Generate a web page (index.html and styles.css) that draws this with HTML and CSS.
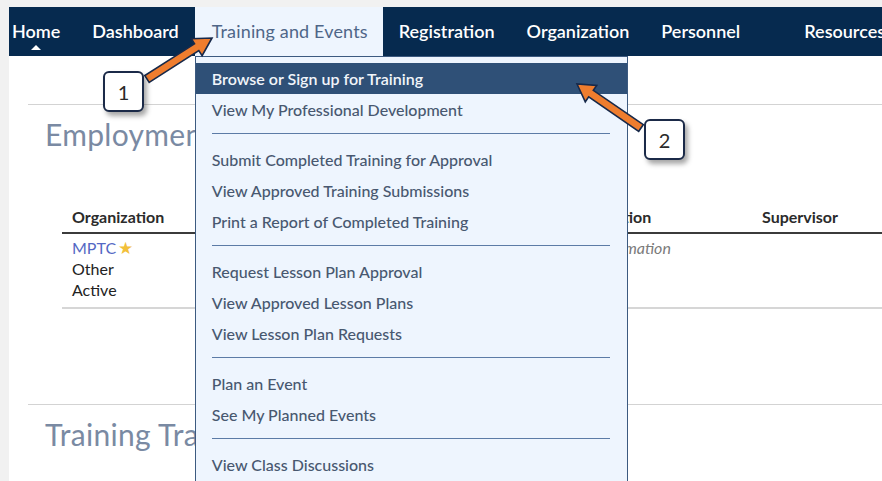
FILE: index.html
```html
<!DOCTYPE html>
<html lang="en">
<head>
<meta charset="utf-8">
<title>Training and Events</title>
<link rel="stylesheet" href="styles.css">
</head>
<body>
<div class="frame">
  <div class="app">
    <nav class="topnav">
      <a class="nav-item nav-home" href="#">Home</a>
      <a class="nav-item" href="#">Dashboard</a>
      <div class="nav-item is-open">
        <span class="tab-label">Training and Events</span>
        <div class="dropdown">
          <a class="menu-item is-active" href="#">Browse or Sign up for Training</a>
          <a class="menu-item" href="#">View My Professional Development</a>
          <div class="menu-sep"></div>
          <a class="menu-item" href="#">Submit Completed Training for Approval</a>
          <a class="menu-item" href="#">View Approved Training Submissions</a>
          <a class="menu-item" href="#">Print a Report of Completed Training</a>
          <div class="menu-sep"></div>
          <a class="menu-item" href="#">Request Lesson Plan Approval</a>
          <a class="menu-item" href="#">View Approved Lesson Plans</a>
          <a class="menu-item" href="#">View Lesson Plan Requests</a>
          <div class="menu-sep"></div>
          <a class="menu-item" href="#">Plan an Event</a>
          <a class="menu-item" href="#">See My Planned Events</a>
          <div class="menu-sep"></div>
          <a class="menu-item" href="#">View Class Discussions</a>
        </div>
      </div>
      <a class="nav-item" href="#">Registration</a>
      <a class="nav-item" href="#">Organization</a>
      <a class="nav-item nav-personnel" href="#">Personnel</a>
      <a class="nav-item" href="#">Resources</a>
    </nav>

    <main class="content">
      <section class="panel">
        <h2 class="panel-title">Employment History</h2>
        <div class="emp-table">
          <div class="emp-grid emp-head">
            <div class="cell">Organization</div>
            <div class="cell"></div>
            <div class="cell"></div>
            <div class="cell">Position</div>
            <div class="cell">Supervisor</div>
          </div>
          <div class="emp-grid emp-row">
            <div class="cell">
              <a class="org-link" href="#">MPTC</a><span class="star">&#9733;</span><br>
              Other<br>
              Active
            </div>
            <div class="cell"></div>
            <div class="cell"></div>
            <div class="cell muted">Information</div>
            <div class="cell"></div>
          </div>
        </div>
      </section>

      <section class="panel">
        <h2 class="panel-title">Training Transcript</h2>
      </section>
    </main>
  </div>

  <div class="annotations">
    <svg class="arrows" width="882" height="481" viewBox="0 0 882 481">
      <polygon class="arrow" points="149.2,82.4 198.8,50.6 202.1,55.6 212,38 191.3,38.8 194.5,43.8 144.8,75.6"/>
      <polygon class="arrow" points="643.3,124.7 593.3,90.3 596.7,85.4 577,84 585.3,101.8 588.7,96.9 638.7,131.3"/>
    </svg>
    <div class="callout callout-one">1</div>
    <div class="callout callout-two">2</div>
  </div>
</div>
</body>
</html>
```

FILE: styles.css
```css
html, body {
  margin: 0;
  height: 481px;
  overflow: hidden;
}

body {
  background: #f1f1f1;
  font-family: Lato, "Noto Sans", sans-serif;
  color: #222;
}

.frame {
  position: relative;
  padding: 7px 0 0 9px;
  height: 474px;
}

.app {
  position: relative;
  background: #fff;
  height: 100%;
}

/* top navigation */
.topnav {
  position: relative;
  z-index: 10;
  display: flex;
  height: 49px;
  background: #062a4f;
}

.nav-item {
  position: relative;
  display: flex;
  align-items: center;
  padding: 0 16px 2px;
  color: #fff;
  font-size: 18px;
  font-weight: 600;
  text-decoration: none;
  white-space: nowrap;
}

.nav-home {
  padding-left: 3px;
}

.nav-home::after {
  content: "";
  position: absolute;
  left: 22px;
  bottom: 6px;
  border-left: 5px solid transparent;
  border-right: 5px solid transparent;
  border-bottom: 5px solid #fff;
}

.nav-personnel {
  margin-right: 32px;
}

.nav-item.is-open {
  background: #eef5fe;
  color: #4f6688;
  font-weight: 400;
  padding-left: 17px;
  padding-right: 15px;
}

.tab-label {
  letter-spacing: 0.15px;
}

/* dropdown */
.dropdown {
  position: absolute;
  top: 100%;
  left: 0;
  width: 433px;
  box-sizing: border-box;
  background: #eef5fe;
  border: 1px solid #3c5a80;
  padding: 6px 0 40px;
  letter-spacing: 0;
}

.menu-item {
  display: block;
  height: 31px;
  line-height: 31px;
  padding-left: 16px;
  font-size: 16px;
  font-weight: 500;
  color: #485870;
  text-decoration: none;
}

.menu-item.is-active {
  background: #2f5077;
  color: #f1f5fa;
  font-weight: 600;
}

.menu-sep {
  height: 1px;
  background: #5c7ba6;
  margin: 8px 17px 10px 16px;
}

/* page content */
.content {
  padding-top: 48px;
}

.panel {
  margin-left: 19px;
  border-top: 1px solid #d3d3d3;
}

.panel-title {
  margin: 0;
  padding: 12px 0 0 17px;
  font-size: 30px;
  font-weight: 400;
  line-height: 34px;
  letter-spacing: 0.3px;
  color: #7a8aa3;
  white-space: nowrap;
}

.emp-table {
  margin: 55px 0 95px 34px;
}

.emp-grid {
  display: grid;
  grid-template-columns: 200px 180px 141px 169px 1fr;
}

.cell {
  padding: 0 10px;
  font-size: 16px;
  line-height: 21px;
}

.emp-head {
  font-weight: 700;
  color: #2b2b2b;
  padding-bottom: 5px;
  border-bottom: 2px solid #3b3b3b;
}

.emp-row {
  padding: 3px 0 7px;
  border-bottom: 2px solid #d6d6d6;
}

.org-link {
  color: #5468c4;
  text-decoration: none;
}

.star {
  margin-left: 2px;
  font-size: 17px;
  line-height: 1;
  color: #f2c03a;
}

.muted {
  font-style: italic;
  color: #7a7a7a;
}

/* callout annotations */
.annotations {
  position: absolute;
  inset: 0;
  pointer-events: none;
  z-index: 20;
}

.arrows {
  position: absolute;
  left: 0;
  top: 0;
}

.arrow {
  fill: #ef7d2e;
  stroke: #17294a;
  stroke-width: 1.6;
  stroke-linejoin: miter;
}

.callout {
  position: absolute;
  width: 37px;
  height: 37px;
  display: flex;
  align-items: center;
  justify-content: center;
  background: #fff;
  border: 2px solid #1b2a48;
  border-radius: 6px;
  box-shadow: 3px 4px 5px rgba(0, 0, 0, 0.35);
  font-family: Lato, "Liberation Sans", sans-serif;
  font-size: 20px;
  color: #2a2a2a;
}

.callout-one {
  left: 103px;
  top: 71px;
}

.callout-two {
  left: 644px;
  top: 119px;
}
```
